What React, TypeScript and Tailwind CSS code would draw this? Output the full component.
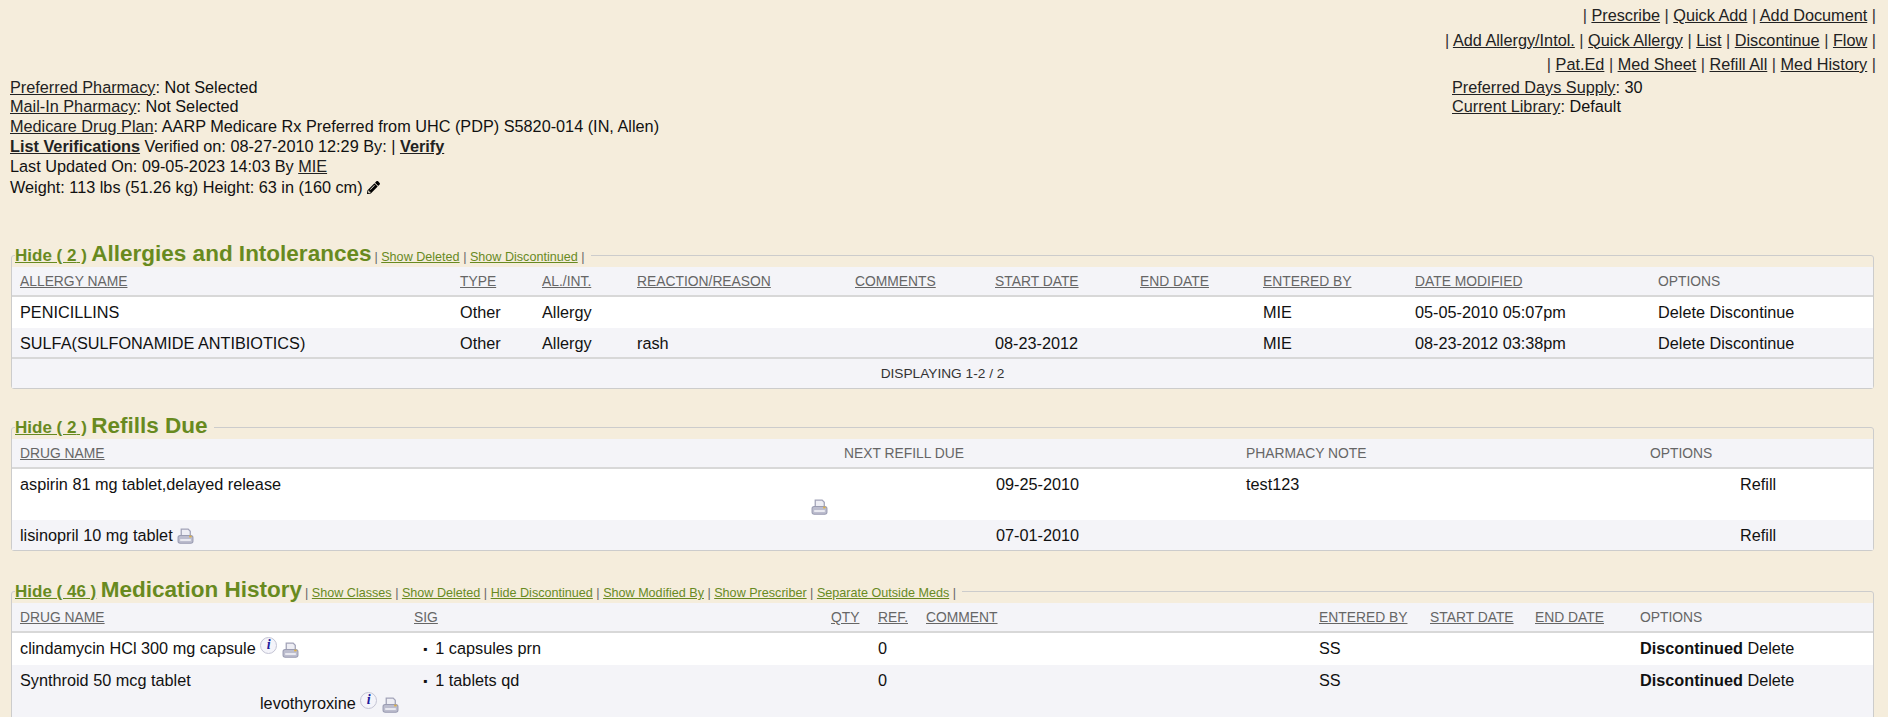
import { FaPencilAlt } from "react-icons/fa";

const linkClass = "underline text-[#222]";

function Printer({ className = "" }: { className?: string }) {
  return (
    <svg viewBox="0 0 16 16" className={"inline-block w-[17px] h-[17px] " + className}>
      <path d="M4 1h6.5l2 2v5H4z" fill="#eeeef4" stroke="#a2a3b8" strokeWidth="1.2" />
      <path d="M1 9c0-1.2 1-2 2-2h10c1 0 2 .8 2 2v3.5c0 1-1 1.8-2 1.8H3c-1 0-2-.8-2-1.8z" fill="#bcbdce" stroke="#9a9cb2" strokeWidth="1" />
      <rect x="3" y="10.5" width="10" height="1.6" fill="#f0f0f6" />
      <rect x="11.5" y="7.2" width="2.2" height="1.6" fill="#e0b040" />
    </svg>
  );
}

function Info() {
  return (
    <span className="inline-flex items-center justify-center w-[17px] h-[17px] rounded-full border border-[#c4c4d4] bg-[#f4f4fa] text-[#1c1c9c] text-[14px] leading-none font-bold italic font-['Liberation_Serif',serif] align-[5px]">
      i
    </span>
  );
}

function NavLine({ items }: { items: string[] }) {
  return (
    <div className="h-[24.5px] leading-[24.5px]">
      <span className="text-[#333]">| </span>
      {items.map((item) => (
        <span key={item}>
          <a className={linkClass}>{item}</a>
          <span className="text-[#333]"> | </span>
        </span>
      ))}
    </div>
  );
}

function Legend({ count, title, links }: { count: number; title: string; links: string[] }) {
  return (
    <legend className="ml-[3px] pr-[6px] h-[24px] leading-[22px] whitespace-nowrap text-[#688a1f]">
      <a className="underline font-bold text-[17px]">Hide ( {count} )</a>{" "}
      <span className="font-bold text-[22.5px]">{title}</span>
      {links.length > 0 && (
        <span className="ml-[3px] text-[12.6px] text-[#666]">
          |{" "}
          {links.map((link) => (
            <span key={link}>
              <a className="underline text-[#688a1f]">{link}</a> |{" "}
            </span>
          ))}
        </span>
      )}
    </legend>
  );
}

const headClass = "h-[30px] bg-[#f4f4f8] border-b-2 border-[#d8d8d8] text-[13.85px] leading-[28px] text-[#666] uppercase";

export default function App() {
  return (
    <div className="h-screen overflow-hidden bg-[#f5eddc] text-[16.25px] text-[#111] font-['Liberation_Sans',Arial,sans-serif]">
      <div className="pt-[3px] pr-[12px] text-right h-[78px]">
        <NavLine items={["Prescribe", "Quick Add", "Add Document"]} />
        <NavLine items={["Add Allergy/Intol.", "Quick Allergy", "List", "Discontinue", "Flow"]} />
        <NavLine items={["Pat.Ed", "Med Sheet", "Refill All", "Med History"]} />
      </div>

      <div className="flex justify-between pl-[10px] h-[165px]">
        <div>
          <div className="leading-[19.3px]"><a className={linkClass}>Preferred Pharmacy</a>: Not Selected</div>
          <div className="leading-[19.3px]"><a className={linkClass}>Mail-In Pharmacy</a>: Not Selected</div>
          <div className="leading-[19.3px]"><a className={linkClass}>Medicare Drug Plan</a>: AARP Medicare Rx Preferred from UHC (PDP) S5820-014 (IN, Allen)</div>
          <div className="leading-[20.5px]"><a className={linkClass + " font-bold"}>List Verifications</a> Verified on: 08-27-2010 12:29 By: | <a className={linkClass + " font-bold"}>Verify</a></div>
          <div className="leading-[20.5px]">Last Updated On: 09-05-2023 14:03 By <a className={linkClass}>MIE</a></div>
          <div className="leading-[21.5px] flex items-center gap-[4px]">Weight: 113 lbs (51.26 kg) Height: 63 in (160 cm) <FaPencilAlt className="w-[13px] h-[13px] text-black" /></div>
        </div>
        <div className="w-[436px]">
          <div className="leading-[19.3px]"><a className={linkClass}>Preferred Days Supply</a>: 30</div>
          <div className="leading-[19.3px]"><a className={linkClass}>Current Library</a>: Default</div>
        </div>
      </div>

      <div className="pl-[11px] pr-[14px]">
        <fieldset className="border border-[#cccccc] rounded-[3px]">
          <Legend count={2} title="Allergies and Intolerances" links={["Show Deleted", "Show Discontinued"]} />
          <div className={headClass + " pl-[8px] grid grid-cols-[440px_82px_95px_218px_140px_145px_123px_152px_243px_1fr]"}>
            <a className="underline">Allergy Name</a>
            <a className="underline">Type</a>
            <a className="underline">Al./Int.</a>
            <a className="underline">Reaction/Reason</a>
            <a className="underline">Comments</a>
            <a className="underline">Start Date</a>
            <a className="underline">End Date</a>
            <a className="underline">Entered By</a>
            <a className="underline">Date Modified</a>
            <span>Options</span>
          </div>
          <div className="h-[31px] bg-white pl-[8px] leading-[31px] grid grid-cols-[440px_82px_95px_218px_140px_145px_123px_152px_243px_1fr]">
            <span>PENICILLINS</span>
            <span>Other</span>
            <span>Allergy</span>
            <span></span>
            <span></span>
            <span></span>
            <span></span>
            <span>MIE</span>
            <span>05-05-2010 05:07pm</span>
            <span>Delete Discontinue</span>
          </div>
          <div className="h-[29px] bg-[#f4f4f8] pl-[8px] leading-[31px] grid grid-cols-[440px_82px_95px_218px_140px_145px_123px_152px_243px_1fr]">
            <span>SULFA(SULFONAMIDE ANTIBIOTICS)</span>
            <span>Other</span>
            <span>Allergy</span>
            <span>rash</span>
            <span></span>
            <span>08-23-2012</span>
            <span></span>
            <span>MIE</span>
            <span>08-23-2012 03:38pm</span>
            <span>Delete Discontinue</span>
          </div>
          <div className="h-[31px] bg-[#f4f4f8] border-t-2 border-[#d8d8d8] text-center text-[13.7px] leading-[29px] text-[#333]">
            DISPLAYING 1-2 / 2
          </div>
        </fieldset>

        <fieldset className="mt-[26px] border border-[#cccccc] rounded-[3px]">
          <Legend count={2} title="Refills Due" links={[]} />
          <div className={headClass + " pl-[8px] grid grid-cols-[824px_402px_404px_1fr]"}>
            <a className="underline">Drug Name</a>
            <span>Next Refill Due</span>
            <span>Pharmacy Note</span>
            <span>Options</span>
          </div>
          <div className="relative h-[51px] bg-white pl-[8px] leading-[31px] grid grid-cols-[976px_250px_494px_1fr]">
            <span>aspirin 81 mg tablet,delayed release</span>
            <span>09-25-2010</span>
            <span>test123</span>
            <span>Refill</span>
            <Printer className="absolute left-[799px] top-[30px]" />
          </div>
          <div className="h-[30px] bg-[#f4f4f8] pl-[8px] leading-[31px] grid grid-cols-[976px_250px_494px_1fr]">
            <span>lisinopril 10 mg tablet <Printer className="align-[-4px]" /></span>
            <span>07-01-2010</span>
            <span></span>
            <span>Refill</span>
          </div>
        </fieldset>

        <fieldset className="mt-[28px] border border-[#cccccc] rounded-[3px]">
          <Legend
            count={46}
            title="Medication History"
            links={["Show Classes", "Show Deleted", "Hide Discontinued", "Show Modified By", "Show Prescriber", "Separate Outside Meds"]}
          />
          <div className={headClass + " pl-[8px] grid grid-cols-[394px_417px_47px_48px_393px_111px_105px_105px_1fr]"}>
            <a className="underline">Drug Name</a>
            <a className="underline">Sig</a>
            <a className="underline">Qty</a>
            <a className="underline">Ref.</a>
            <a className="underline">Comment</a>
            <a className="underline">Entered By</a>
            <a className="underline">Start Date</a>
            <a className="underline">End Date</a>
            <span>Options</span>
          </div>
          <div className="h-[32px] bg-white pl-[8px] leading-[31px] grid grid-cols-[394px_417px_47px_48px_393px_111px_105px_105px_1fr]">
            <span className="whitespace-nowrap">clindamycin HCl 300 mg capsule <Info /> <Printer className="align-[-5px]" /></span>
            <span className="pl-[9px]"><span className="mr-[8px] text-[12px] align-[1px]">▪</span>1 capsules prn</span>
            <span></span>
            <span>0</span>
            <span></span>
            <span>SS</span>
            <span></span>
            <span></span>
            <span><b>Discontinued</b> Delete</span>
          </div>
          <div className="h-[60px] bg-[#f4f4f8] pl-[8px] leading-[31px] grid grid-cols-[394px_417px_47px_48px_393px_111px_105px_105px_1fr]">
            <div>
              <div className="h-[23px]">Synthroid 50 mcg tablet</div>
              <div className="pl-[240px] leading-[30px] whitespace-nowrap">levothyroxine <Info /> <Printer className="align-[-5px]" /></div>
            </div>
            <span className="pl-[9px]"><span className="mr-[8px] text-[12px] align-[1px]">▪</span>1 tablets qd</span>
            <span></span>
            <span>0</span>
            <span></span>
            <span>SS</span>
            <span></span>
            <span></span>
            <span><b>Discontinued</b> Delete</span>
          </div>
          <div className="h-[40px] bg-white"></div>
        </fieldset>
      </div>
    </div>
  );
}
